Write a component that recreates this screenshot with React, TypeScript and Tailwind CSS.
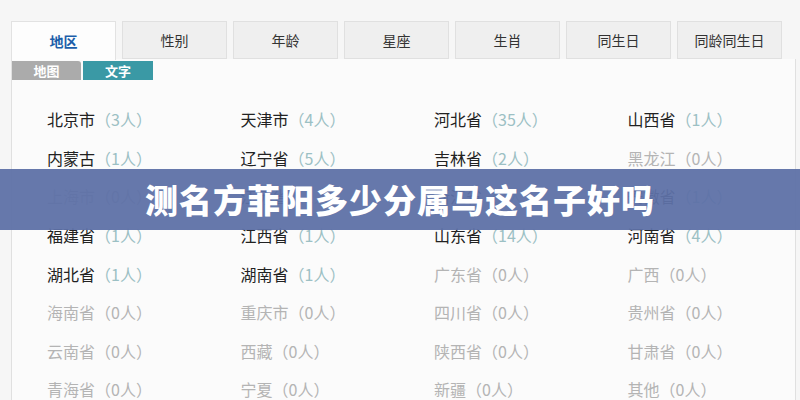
import React from "react";

const tabs = ["地区", "性别", "年龄", "星座", "生肖", "同生日", "同龄同生日"];

const rows: [string, number][][] = [
  [["北京市", 3], ["天津市", 4], ["河北省", 35], ["山西省", 1]],
  [["内蒙古", 1], ["辽宁省", 5], ["吉林省", 2], ["黑龙江", 0]],
  [["上海市", 0], ["江苏省", 2], ["浙江省", 3], ["安徽省", 1]],
  [["福建省", 1], ["江西省", 1], ["山东省", 14], ["河南省", 4]],
  [["湖北省", 1], ["湖南省", 1], ["广东省", 0], ["广西", 0]],
  [["海南省", 0], ["重庆市", 0], ["四川省", 0], ["贵州省", 0]],
  [["云南省", 0], ["西藏", 0], ["陕西省", 0], ["甘肃省", 0]],
  [["青海省", 0], ["宁夏", 0], ["新疆", 0], ["其他", 0]],
];

const cjk = { fontFamily: '"Microsoft YaHei", "Noto Sans CJK SC", sans-serif' };

export default function App() {
  return (
    <div
      className="relative w-[800px] h-[400px] overflow-hidden bg-[#f6f6f6] pt-[21px] pl-[11px] pr-[4px]"
      style={cjk}
    >
      <div className="flex gap-[6px]">
        {tabs.map((t, i) => (
          <div
            key={t}
            className={
              i === 0
                ? "w-[105px] h-[39px] flex items-center justify-center bg-[#fdfdfd] border border-b-0 border-[#e2e2e2] text-[#1b5ea9] text-[14px] font-bold"
                : "w-[105px] h-[38px] flex items-center justify-center bg-[#efefef] border border-[#e0e0e0] text-[#333] text-[14px]"
            }
          >
            {t}
          </div>
        ))}
      </div>
      <div className="h-[341px] border-l border-r border-[#e0e0e0] bg-[#fbfbfb] -mt-px border-t-0">
        <div className="flex gap-[2px] pt-[2px]">
          <div className="w-[69px] h-[19px] flex items-center justify-center bg-[#ababab] rounded-tr-[3px] text-white text-[13px] font-bold">
            地图
          </div>
          <div className="w-[70px] h-[19px] flex items-center justify-center bg-[#3a99a5] text-white text-[13px] font-bold">
            文字
          </div>
        </div>
        <div className="pl-[35px] pt-[20px] flex flex-col">
          {rows.map((r, ri) => (
            <div key={ri} className="flex h-[38.6px] items-center">
              {r.map(([name, n]) => (
                <div
                  key={name}
                  className={
                    n > 0
                      ? "w-[193.5px] shrink-0 text-[16px] text-[#222] whitespace-nowrap"
                      : "w-[193.5px] shrink-0 text-[16px] text-[#b4b4b4] whitespace-nowrap"
                  }
                >
                  {name}
                  <span className={n > 0 ? "text-[#9cc0c4]" : "text-[#b4b4b4]"}>
                    （{n}人）
                  </span>
                </div>
              ))}
            </div>
          ))}
        </div>
      </div>
      <div className="absolute left-0 right-0 top-[169px] h-[61px] bg-[#5e71a6]/95 flex items-center justify-center">
        <span className="text-white text-[33px] font-black tracking-[1px]" style={cjk}>
          测名方菲阳多少分属马这名子好吗
        </span>
      </div>
    </div>
  );
}
